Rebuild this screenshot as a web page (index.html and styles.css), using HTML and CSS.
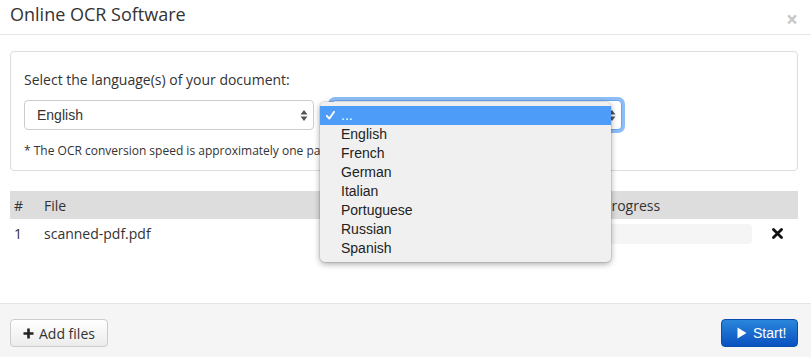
FILE: index.html
```html
<!DOCTYPE html>
<html>
<head>
<meta charset="utf-8">
<link rel="stylesheet" href="styles.css">
</head>
<body>
<div class="modal">
  <div class="modal-header">
    <h1 class="title">Online OCR Software</h1>
    <span class="close">×</span>
  </div>
  <div class="modal-body">
    <div class="panel">
      <div class="label">Select the language(s) of your document:</div>
      <div class="selects">
        <div class="select">
          <span>English</span>
          <svg class="arrows" width="8" height="13" viewBox="0 0 8 13"><path d="M4 1 L7.5 5.5 H0.5 Z M4 12 L7.5 7.5 H0.5 Z" fill="#555"/></svg>
        </div>
        <div class="select focused">
          <span></span>
          <svg class="arrows" width="8" height="13" viewBox="0 0 8 13"><path d="M4 1 L7.5 5.5 H0.5 Z M4 12 L7.5 7.5 H0.5 Z" fill="#555"/></svg>
        </div>
        <div class="dropdown">
          <div class="opt selected"><svg class="check" width="9" height="9" viewBox="0 0 9 9"><path d="M0.8 4.8 L3.3 7.6 L8.2 0.8" fill="none" stroke="#fff" stroke-width="1.8" stroke-linecap="round" stroke-linejoin="round"/></svg>...</div>
          <div class="opt">English</div>
          <div class="opt">French</div>
          <div class="opt">German</div>
          <div class="opt">Italian</div>
          <div class="opt">Portuguese</div>
          <div class="opt">Russian</div>
          <div class="opt">Spanish</div>
        </div>
      </div>
      <div class="note">* The OCR conversion speed is approximately one page per second.</div>
    </div>
    <div class="table">
      <div class="row head">
        <div class="cell">#</div>
        <div class="cell">File</div>
        <div class="cell">Progress</div>
        <div class="cell"></div>
      </div>
      <div class="row">
        <div class="cell">1</div>
        <div class="cell">scanned-pdf.pdf</div>
        <div class="cell"><div class="progress"></div></div>
        <div class="cell action"><svg width="11" height="11" viewBox="0 0 11 11"><path d="M1.5 1.5 L9.5 9.5 M9.5 1.5 L1.5 9.5" stroke="#111" stroke-width="2.8" stroke-linecap="round"/></svg></div>
      </div>
    </div>
  </div>
  <div class="modal-footer">
    <button class="btn btn-default"><svg width="11" height="11" viewBox="0 0 11 11"><path d="M5.5 0.5 V10.5 M0.5 5.5 H10.5" stroke="#222" stroke-width="2.6"/></svg>Add files</button>
    <button class="btn btn-primary"><svg width="10" height="12" viewBox="0 0 10 12"><path d="M0.5 0.5 L9.5 6 L0.5 11.5 Z" fill="#fff"/></svg>Start!</button>
  </div>
</div>
</body>
</html>
```
FILE: styles.css
```css
* { box-sizing: border-box; }
html, body { margin: 0; padding: 0; background: #fff; }
body { font-family: "Open Sans", "DejaVu Sans", sans-serif; color: #333; font-size: 14px; }
.modal { width: 811px; height: 357px; display: flex; flex-direction: column; }
.modal-header { height: 35px; border-bottom: 1px solid #e5e5e5; display: flex; align-items: center; justify-content: space-between; padding: 0 13px 0 10px; }
.title { margin: 0; font-size: 18px; font-weight: 400; line-height: 24px; color: #333; margin-top: -6px; }
.close { font-size: 21px; font-weight: 700; color: #c8c8c8; line-height: 20px; margin-top: 3px; }
.modal-body { flex: 1; padding: 16px 13px 0 10px; }
.panel { border: 1px solid #ddd; border-radius: 4px; padding: 18px 13px 9px 13px; }
.label { line-height: 20px; font-size: 14px; }
.selects { position: relative; display: flex; gap: 17px; margin-top: 10px; }
.select { width: 290px; height: 30px; border: 1px solid #ccc; border-radius: 4px; background: #fff; display: flex; align-items: center; justify-content: space-between; padding: 0 5px 0 12px; font-family: "Liberation Sans", Arial, sans-serif; font-size: 14px; color: #333; }
.select.focused { width: 291px; border-color: #6aa7ee; box-shadow: 0 0 0 3px #8dbdf6; }
.dropdown { position: absolute; left: 296px; top: 2px; width: 291px; height: 160px; background: #f0f0f0; border-radius: 5px; box-shadow: 0 2px 6px rgba(0,0,0,0.35), 0 0 0 1px rgba(0,0,0,0.08); padding: 4px 0; font-family: "Liberation Sans", Arial, sans-serif; font-size: 14px; color: #222; z-index: 5; }
.opt { height: 19px; line-height: 19px; padding-left: 21px; }
.opt.selected { background: #4c9cf8; color: #fff; padding-left: 6px; display: flex; align-items: center; }
.check { margin-right: 6px; }
.note { margin-top: 11px; font-size: 12px; line-height: 20px; width: 296px; white-space: nowrap; overflow: hidden; }
.table { margin-top: 20px; }
.row { display: grid; grid-template-columns: 30px 1fr 157px 42px; height: 28px; align-items: center; }
.row.head { background: #ddd; }
.cell { padding: 0 4px; white-space: nowrap; }
.progress { height: 20px; background: #f5f5f5; border-radius: 4px; margin-top: 2px; }
.action { display: flex; justify-content: center; padding: 0; }
.modal-footer { height: 54px; border-top: 1px solid #e5e5e5; background: #f5f5f5; display: flex; justify-content: space-between; align-items: flex-start; padding: 15px 13px 0 10px; }
.btn { height: 28px; border-radius: 4px; font-size: 14px; display: flex; align-items: center; gap: 5px; cursor: pointer; }
.btn-default { width: 98px; padding: 0 0 0 12px; border: 1px solid #ccc; background: linear-gradient(#fff, #ececec); color: #333; font-family: "Open Sans", sans-serif; }
.btn-primary { width: 77px; padding: 0 0 0 15px; border: 1px solid #0a4db0; background: linear-gradient(#2a86dc, #0a51c0); color: #fff; font-family: "Liberation Sans", Arial, sans-serif; font-weight: 400; gap: 6px; }
```
